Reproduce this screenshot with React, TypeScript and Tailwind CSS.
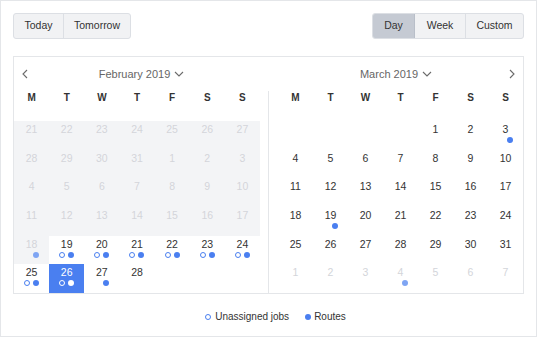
import React from "react"

type Day = { n: number; muted?: boolean; grey?: boolean; open?: boolean; route?: boolean; fadedRoute?: boolean; selected?: boolean } | null

const WEEK = ["M", "T", "W", "T", "F", "S", "S"]

const range = (a: number, b: number, extra: object = {}) => {
  const out: Day[] = []
  for (let i = a; i <= b; i++) out.push({ n: i, ...extra })
  return out
}

const feb: Day[] = [
  ...range(21, 31, { muted: true, grey: true }),
  ...range(1, 17, { muted: true, grey: true }),
  { n: 18, muted: true, grey: true, fadedRoute: true },
  ...range(19, 25, { open: true, route: true }),
  { n: 26, open: true, route: true, selected: true },
  { n: 27, route: true },
  { n: 28 },
  null,
  null,
  null,
]

const mar: Day[] = [
  null,
  null,
  null,
  null,
  { n: 1 },
  { n: 2 },
  { n: 3, route: true },
  ...range(4, 18),
  { n: 19, route: true },
  ...range(20, 31),
  { n: 1, muted: true },
  { n: 2, muted: true },
  { n: 3, muted: true },
  { n: 4, muted: true, fadedRoute: true },
  { n: 5, muted: true },
  { n: 6, muted: true },
  { n: 7, muted: true },
]

const Chevron = ({ dir }: { dir: "left" | "right" | "down" }) => {
  const pts = dir === "left" ? "6,1 2,5 6,9" : dir === "right" ? "2,1 6,5 2,9" : "1,3 5,7 9,3"
  return (
    <svg width={dir === "down" ? 10 : 8} height="10" viewBox={dir === "down" ? "0 0 10 10" : "0 0 8 10"} fill="none" stroke="#6b6b6b" strokeWidth="1.1">
      <polyline points={pts} />
    </svg>
  )
}

const Cell = ({ d }: { d: Day }) => {
  if (!d) return <div />
  const bg = d.selected ? "bg-[#4a7ff0]" : d.grey ? "bg-[#f3f4f6]" : ""
  const txt = d.selected ? "text-white" : d.muted ? "text-[#d3d5da]" : "text-[#333]"
  const ring = d.selected ? "border-white" : "border-[#4a7ff0]"
  const fill = d.selected ? "bg-white" : d.fadedRoute ? "bg-[#7fa5f3]" : "bg-[#4a7ff0]"
  return (
    <div className={`flex flex-col items-center pt-[1px] ${bg}`}>
      <span className={`text-[10.5px] leading-[14px] ${txt}`}>{d.n}</span>
      <div className="mt-[1px] flex gap-[3px]">
        <span className={`size-[6px] rounded-full border ${d.open ? ring : "border-transparent"}`} />
        <span className={`size-[6px] rounded-full ${d.route || d.fadedRoute ? fill : ""}`} />
      </div>
    </div>
  )
}

const Month = ({ days }: { days: Day[] }) => (
  <div>
    <div className="grid h-[30px] grid-cols-7">
      {WEEK.map((w, i) => (
        <div key={i} className="text-center text-[10px] font-bold leading-[14px] text-[#333]">
          {w}
        </div>
      ))}
    </div>
    <div className="grid auto-rows-[28.67px] grid-cols-7">
      {days.map((d, i) => (
        <Cell key={i} d={d} />
      ))}
    </div>
  </div>
)

export default function App() {
  return (
    <div className="flex h-[337px] w-[537px] flex-col border border-[#e4e6e9] bg-white px-[12px] pt-[12px]" style={{ fontFamily: '"Liberation Sans", Arial, sans-serif' }}>
      <div className="flex justify-between">
        <div className="flex h-[26px] overflow-hidden rounded-[3px] border border-[#dcdfe4] bg-[#f1f2f4] text-[10.5px] text-[#333]">
          <div className="flex w-[50px] items-center justify-center border-r border-[#dcdfe4]">Today</div>
          <div className="flex w-[66px] items-center justify-center">Tomorrow</div>
        </div>
        <div className="flex h-[26px] overflow-hidden rounded-[3px] border border-[#dcdfe4] bg-[#f1f2f4] text-[10.5px] text-[#333]">
          <div className="flex w-[42px] items-center justify-center border-r border-[#b9bfc9] bg-[#c5cad3]">Day</div>
          <div className="flex w-[51px] items-center justify-center border-r border-[#dcdfe4]">Week</div>
          <div className="flex w-[57px] items-center justify-center">Custom</div>
        </div>
      </div>

      <div className="mt-[17px] flex border border-[#e4e6e9]">
        <div className="w-[255px]">
          <div className="relative flex h-[34px] items-center justify-center gap-[4px] text-[11px] text-[#666]">
            <span className="absolute left-[7px] top-[12px]">
              <Chevron dir="left" />
            </span>
            <span>February 2019</span>
            <Chevron dir="down" />
          </div>
          <div className="border-r border-[#e4e6e9] pr-[8px]">
            <Month days={feb} />
          </div>
        </div>
        <div className="flex-1">
          <div className="relative flex h-[34px] items-center justify-center gap-[4px] text-[11px] text-[#666]">
            <span>March 2019</span>
            <Chevron dir="down" />
            <span className="absolute right-[7px] top-[12px]">
              <Chevron dir="right" />
            </span>
          </div>
          <div className="pl-[9px]">
            <Month days={mar} />
          </div>
        </div>
      </div>

      <div className="mt-[16px] flex items-center justify-center gap-[16px] pl-[14px] text-[10px] leading-[14px] text-[#333]">
        <div className="flex items-center gap-[4px]">
          <span className="size-[6px] rounded-full border border-[#4a7ff0]" />
          <span>Unassigned jobs</span>
        </div>
        <div className="flex items-center gap-[3px]">
          <span className="size-[6px] rounded-full bg-[#4a7ff0]" />
          <span>Routes</span>
        </div>
      </div>
    </div>
  )
}
